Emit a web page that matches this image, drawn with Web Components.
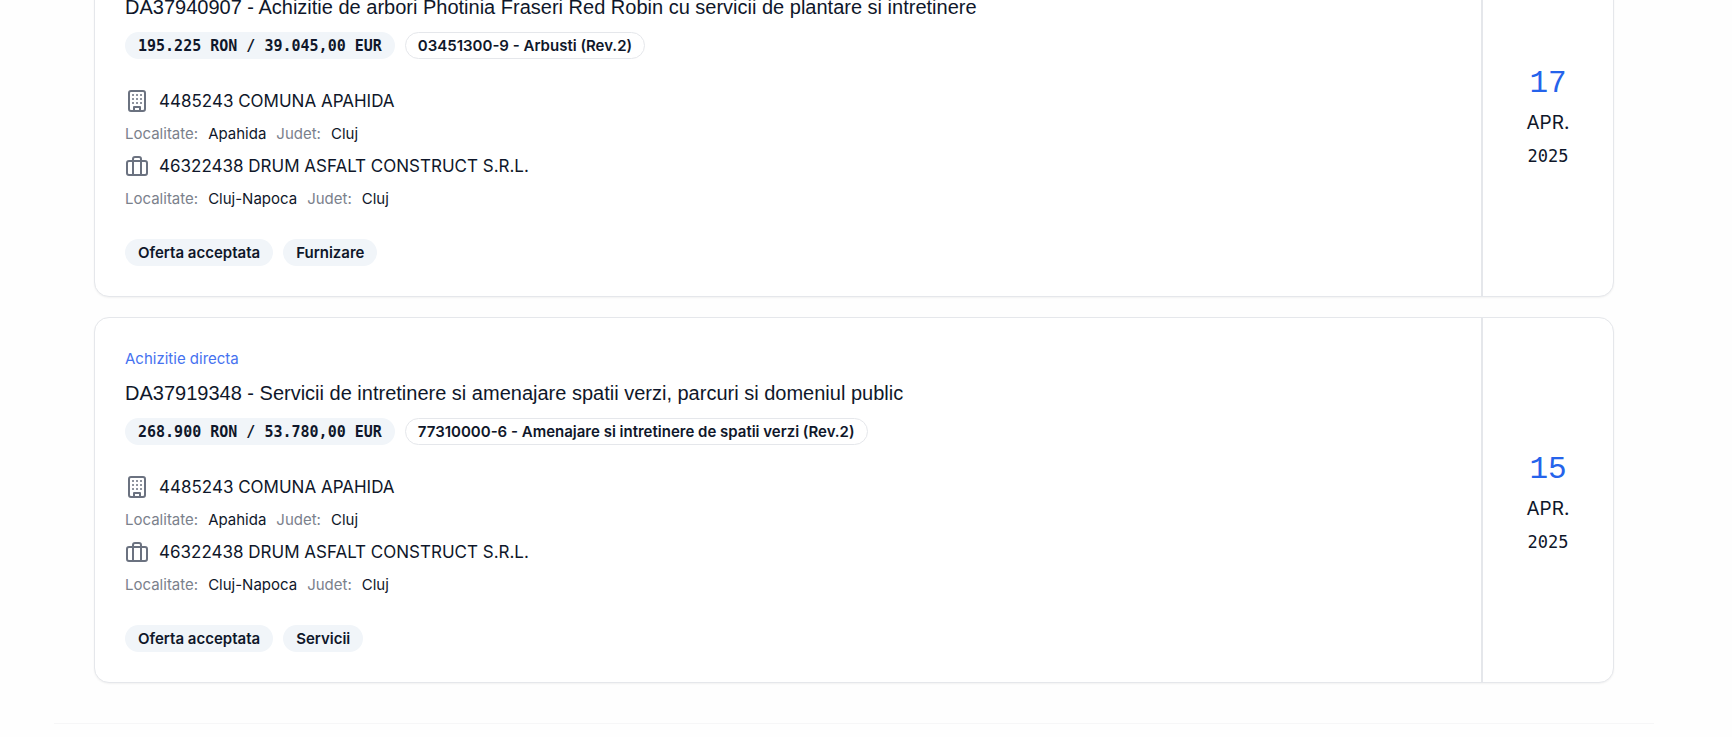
<!DOCTYPE html>
<html lang="ro">
<head>
<meta charset="utf-8">
<meta name="viewport" content="width=device-width, initial-scale=1">
<title>Achizitii directe</title>
<style>
  :root {
    --text-color: #0f172a;
    --text-color-muted: #7b818c;
    --icon-color: #6b7280;
    --accent-color: #2563eb;
    --link-color: #4672f0;
    --border-color: #e5e7eb;
    --badge-color: #f1f5f9;
    --font-sans: Inter, "Liberation Sans", Arial, sans-serif;
    --font-title: "Liberation Sans", Arial, sans-serif;
    --font-mono: "Liberation Mono", "Courier New", monospace;
    --font-mono-wide: "DejaVu Sans Mono", "Liberation Mono", monospace;
  }

  body {
    margin: 0;
    padding: 0 78px 0 54px;
    overflow: hidden;
    font-family: var(--font-sans);
    font-size: 17px;
    color: var(--text-color);
    background: #fefefe;
  }
</style>
</head>
<body>

<acquisition-list>
  <acquisition-card data-day="17" data-month="apr." data-year="2025">
    <a slot="kind" href="#directe">Achizitie directa</a>
    <span slot="title">DA37940907 - Achizitie de arbori Photinia Fraseri Red Robin cu servicii de plantare si intretinere</span>
    <tag-badge slot="values" data-type="money">195.225 RON / 39.045,00 EUR</tag-badge>
    <tag-badge slot="values" data-type="outline">03451300-9 - Arbusti (Rev.2)</tag-badge>
    <company-info data-icon="building" data-city="Apahida" data-county="Cluj">4485243 COMUNA APAHIDA</company-info>
    <company-info data-icon="briefcase" data-city="Cluj-Napoca" data-county="Cluj">46322438 DRUM ASFALT CONSTRUCT S.R.L.</company-info>
    <tag-badge slot="tags">Oferta acceptata</tag-badge>
    <tag-badge slot="tags">Furnizare</tag-badge>
  </acquisition-card>

  <acquisition-card data-day="15" data-month="apr." data-year="2025">
    <a slot="kind" href="#directe">Achizitie directa</a>
    <span slot="title">DA37919348 - Servicii de intretinere si amenajare spatii verzi, parcuri si domeniul public</span>
    <tag-badge slot="values" data-type="money">268.900 RON / 53.780,00 EUR</tag-badge>
    <tag-badge slot="values" data-type="outline">77310000-6 - Amenajare si intretinere de spatii verzi (Rev.2)</tag-badge>
    <company-info data-icon="building" data-city="Apahida" data-county="Cluj">4485243 COMUNA APAHIDA</company-info>
    <company-info data-icon="briefcase" data-city="Cluj-Napoca" data-county="Cluj">46322438 DRUM ASFALT CONSTRUCT S.R.L.</company-info>
    <tag-badge slot="tags">Oferta acceptata</tag-badge>
    <tag-badge slot="tags">Servicii</tag-badge>
  </acquisition-card>
</acquisition-list>

<script>
const icons = {
  building: `
    <rect width="16" height="20" x="4" y="2" rx="2"/>
    <path d="M9 22v-4h6v4"/>
    <path d="M8 6h.01M12 6h.01M16 6h.01M8 10h.01M12 10h.01M16 10h.01M8 14h.01M12 14h.01M16 14h.01"/>
  `,
  briefcase: `
    <path d="M16 21V5a2 2 0 0 0-2-2h-4a2 2 0 0 0-2 2v16"/>
    <rect width="20" height="14" x="2" y="7" rx="2"/>
  `
}

const listCss = `
  :host {
    display: flex;
    flex-direction: column;
    gap: 20px;
    margin-top: -69px;
    padding: 0 40px 40px;
    border-bottom: 1px solid #f6f6f7;
  }
`

const cardCss = `
  :host {
    display: flex;
    border: 1px solid var(--border-color);
    border-radius: 15px;
    background: #fff;
    box-shadow: 0 1px 2px rgb(0 0 0 / 0.05);
  }

  .content {
    display: flex;
    flex: 1;
    flex-direction: column;
    gap: 30px;
    min-width: 0;
    padding: 30px;
  }

  .heading,
  .companies {
    display: flex;
    flex-direction: column;
    align-items: flex-start;
    gap: 10px;
  }

  h2 {
    margin: 0;
    font-family: var(--font-title);
    font-size: 20px;
    font-weight: 400;
    line-height: 29px;
  }

  .badges {
    display: flex;
    flex-wrap: wrap;
    gap: 10px;
  }

  .date {
    display: flex;
    flex-direction: column;
    align-items: center;
    justify-content: center;
    gap: 5px;
    box-sizing: border-box;
    width: 132px;
    padding-top: 6px;
    border-left: 2px solid var(--border-color);
    line-height: 28px;
  }

  .day {
    font-family: var(--font-mono);
    font-size: 31px;
    line-height: 40px;
    color: var(--accent-color);
  }

  .month {
    font-size: 19px;
    text-transform: uppercase;
  }

  .year {
    font-family: var(--font-mono-wide);
    font-size: 17px;
  }

  ::slotted(a) {
    font-size: 15px;
    line-height: 21px;
    color: var(--link-color);
    text-decoration: none;
  }
`

const badgeCss = `
  :host {
    display: inline-flex;
    padding: 2px 12px;
    border: 1px solid transparent;
    border-radius: 14px;
    font-size: 15px;
    font-weight: 600;
    line-height: 21px;
    background: var(--badge-color);
  }

  :host([data-type="money"]) {
    padding: 3px 12px 1px;
    font-family: var(--font-mono-wide);
  }

  :host([data-type="outline"]) {
    border-color: var(--border-color);
    background: none;
  }
`

const companyCss = `
  :host {
    display: flex;
    flex-direction: column;
    gap: 10px;
  }

  .name {
    display: flex;
    align-items: center;
    gap: 10px;
    line-height: 24px;
  }

  svg {
    flex: none;
    width: 24px;
    height: 24px;
    fill: none;
    stroke: var(--icon-color);
    stroke-width: 2;
    stroke-linecap: round;
    stroke-linejoin: round;
  }

  dl {
    display: flex;
    gap: 10px;
    margin: 0;
    font-size: 15px;
    line-height: 21px;
  }

  dt {
    color: var(--text-color-muted);
  }

  dd {
    margin: 0;
  }
`

class AcquisitionList extends HTMLElement {
  constructor() {
    super()
    this.attachShadow({ mode: 'open' })
  }

  connectedCallback() {
    this.shadowRoot.innerHTML = `<style>${listCss}</style><slot></slot>`
  }
}

class AcquisitionCard extends HTMLElement {
  constructor() {
    super()
    this.attachShadow({ mode: 'open' })
  }

  connectedCallback() {
    this.render()
  }

  render() {
    const { day, month, year } = this.dataset
    this.shadowRoot.innerHTML = `
      <style>${cardCss}</style>
      <div class="content">
        <div class="heading">
          <slot name="kind"></slot>
          <h2><slot name="title"></slot></h2>
          <div class="badges"><slot name="values"></slot></div>
        </div>
        <div class="companies"><slot></slot></div>
        <div class="badges"><slot name="tags"></slot></div>
      </div>
      <div class="date">
        <span class="day">${day}</span>
        <span class="month">${month}</span>
        <span class="year">${year}</span>
      </div>
    `
  }
}

class TagBadge extends HTMLElement {
  constructor() {
    super()
    this.attachShadow({ mode: 'open' })
  }

  connectedCallback() {
    this.shadowRoot.innerHTML = `<style>${badgeCss}</style><slot></slot>`
  }
}

class CompanyInfo extends HTMLElement {
  constructor() {
    super()
    this.attachShadow({ mode: 'open' })
  }

  connectedCallback() {
    this.render()
  }

  render() {
    const { icon, city, county } = this.dataset
    this.shadowRoot.innerHTML = `
      <style>${companyCss}</style>
      <div class="name">
        <svg viewBox="0 0 24 24" aria-hidden="true">${icons[icon]}</svg>
        <slot></slot>
      </div>
      <dl>
        <dt>Localitate:</dt>
        <dd>${city}</dd>
        <dt>Judet:</dt>
        <dd>${county}</dd>
      </dl>
    `
  }
}

customElements.define('acquisition-list', AcquisitionList)
customElements.define('acquisition-card', AcquisitionCard)
customElements.define('tag-badge', TagBadge)
customElements.define('company-info', CompanyInfo)
</script>
</body>
</html>
